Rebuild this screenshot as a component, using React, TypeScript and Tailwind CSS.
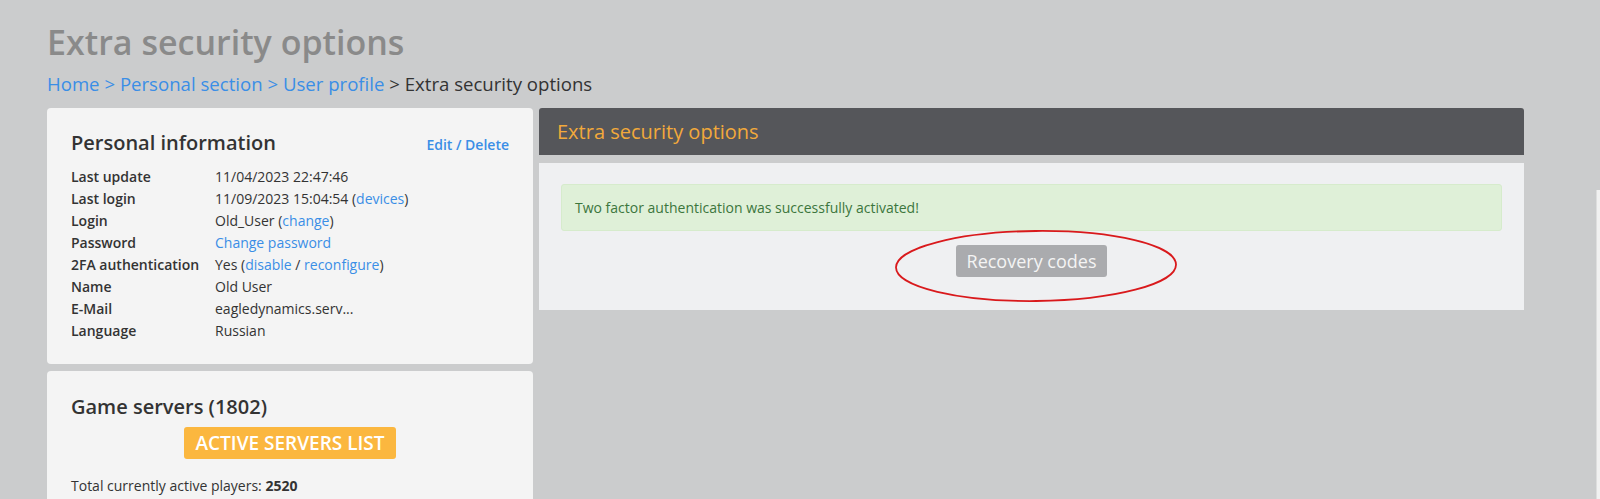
import React from "react";

type Row = {
  label: string;
  value: React.ReactNode;
};

const Link = ({ children }: { children: React.ReactNode }) => (
  <a href="#" className="text-[#3a8ee6]">
    {children}
  </a>
);

const rows: Row[] = [
  { label: "Last update", value: "11/04/2023 22:47:46" },
  {
    label: "Last login",
    value: (
      <>
        11/09/2023 15:04:54 (<Link>devices</Link>)
      </>
    ),
  },
  {
    label: "Login",
    value: (
      <>
        Old_User (<Link>change</Link>)
      </>
    ),
  },
  { label: "Password", value: <Link>Change password</Link> },
  {
    label: "2FA authentication",
    value: (
      <>
        Yes (<Link>disable</Link> / <Link>reconfigure</Link>)
      </>
    ),
  },
  { label: "Name", value: "Old User" },
  { label: "E-Mail", value: "eagledynamics.serv..." },
  { label: "Language", value: "Russian" },
];

const PersonalInfo = () => (
  <div className="h-[256px] rounded-[4px] bg-[#f4f4f4] px-[24px] pt-[20px]">
    <div className="flex items-baseline justify-between">
      <h2 className="text-[20px] font-semibold text-[#333]">Personal information</h2>
      <a href="#" className="text-[14px] font-semibold text-[#3a8ee6]">
        Edit / Delete
      </a>
    </div>
    <div className="mt-[7px] flex flex-col">
      {rows.map((r) => (
        <div key={r.label} className="flex h-[22px] items-center text-[14px] text-[#333]">
          <div className="w-[144px] font-semibold">{r.label}</div>
          <div>{r.value}</div>
        </div>
      ))}
    </div>
  </div>
);

const GameServers = () => (
  <div className="h-[140px] rounded-[4px] bg-[#f4f4f4] px-[24px] pt-[21px]">
    <h2 className="text-[20px] font-semibold text-[#333]">Game servers (1802)</h2>
    <div className="mt-[5px] flex justify-center">
      <button className="h-[32px] rounded-[3px] bg-[#fbb73f] px-[12px] text-[19px] font-semibold text-white">
        ACTIVE SERVERS LIST
      </button>
    </div>
    <p className="mt-[16px] text-[14px] text-[#333]">
      Total currently active players: <b>2520</b>
    </p>
  </div>
);

const SecurityPanel = () => (
  <div className="flex flex-col">
    <div className="flex h-[47px] items-center rounded-t-[3px] bg-[#55565a] px-[18px]">
      <h3 className="text-[20px] text-[#f2a93b]">Extra security options</h3>
    </div>
    <div className="relative mt-[8px] flex h-[147px] flex-col items-center bg-[#eff0f2] px-[22px] pt-[21px]">
      <div className="flex h-[47px] w-full items-center rounded-[3px] border border-[#d6ebcc] bg-[#dff0d8] px-[13px] text-[14px] text-[#3c763d]">
        Two factor authentication was successfully activated!
      </div>
      <button className="mt-[14px] h-[32px] rounded-[3px] bg-[#aaabae] px-[11px] text-[18px] text-[#f4f4f4]">
        Recovery codes
      </button>
      <svg
        className="pointer-events-none absolute left-[355px] top-[66px]"
        width="284"
        height="74"
        viewBox="0 0 284 74"
      >
        <ellipse
          cx="142"
          cy="37"
          rx="140"
          ry="35"
          fill="none"
          stroke="#d9191c"
          strokeWidth="1.8"
          transform="rotate(-0.6 142 37)"
        />
      </svg>
    </div>
  </div>
);

export default function App() {
  return (
    <div className="relative h-[499px] overflow-hidden bg-[#cbcccd] font-['Open_Sans',sans-serif]">
      <div className="pl-[47px] pt-[18px]">
        <h1 className="text-[34px] leading-[48px] font-semibold text-[#8a8a8a]">Extra security options</h1>
        <nav className="mt-[5px] text-[18.6px] leading-[26px] text-[#333]">
          <Link>Home</Link> <span className="text-[#3a8ee6]">&gt;</span> <Link>Personal section</Link>{" "}
          <span className="text-[#3a8ee6]">&gt;</span> <Link>User profile</Link> &gt; Extra security options
        </nav>
        <div className="mt-[11px] flex gap-[6px]">
          <div className="flex w-[486px] flex-col gap-[7px]">
            <PersonalInfo />
            <GameServers />
          </div>
          <div className="w-[985px]">
            <SecurityPanel />
          </div>
        </div>
      </div>
      <div className="absolute right-0 top-[190px] h-[309px] w-[4px] border-l border-[#dedede] bg-[#f1f1f1]" />
    </div>
  );
}
